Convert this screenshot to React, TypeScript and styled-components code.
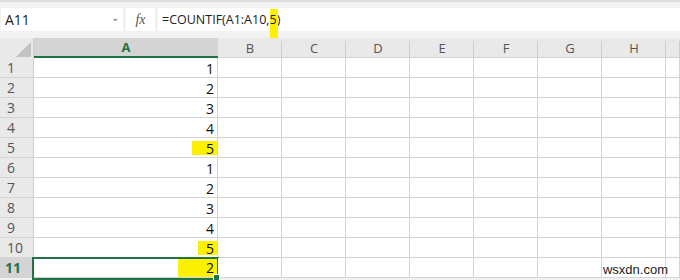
import React from 'react'
import styled, { createGlobalStyle } from 'styled-components'

const GlobalStyle = createGlobalStyle`
  html, body {
    margin: 0;
    padding: 0;
    background: #ffffff;
  }
  body {
    font-family: "Open Sans", "Liberation Sans", sans-serif;
    overflow: hidden;
  }
`

const excelGreen = '#217346'
const highlight = '#fdf000'

const Sheet = styled.div`
  width: 680px;
  height: 280px;
  position: relative;
  overflow: hidden;
  background: #f2f2f2;
`

const FormulaBar = styled.div`
  display: flex;
  align-items: stretch;
  gap: 3px;
  height: 23px;
  padding: 6px 0 7px 1px;
  border-top: 2px solid #dedede;
  box-sizing: content-box;
  position: relative;
`

const NameBox = styled.div`
  width: 122px;
  background: #fff;
  display: flex;
  align-items: center;
  justify-content: space-between;
  padding: 0 4px 0 4px;
  box-sizing: border-box;
  font-size: 14px;
  color: #222;
`

const Chevron = styled.span`
  font-size: 10px;
  color: #666;
  margin-top: -5px;
`

const FxBox = styled.div`
  width: 29px;
  background: #fff;
  display: flex;
  align-items: center;
  justify-content: center;
  font-family: "Liberation Serif", serif;
  font-style: italic;
  font-size: 14px;
  color: #555;
`

const FormulaInput = styled.div`
  flex: 1;
  background: #fff;
  display: flex;
  align-items: center;
  padding-left: 4px;
  font-size: 12.5px;
  color: #222;
  position: relative;
`

const Mark = styled.span`
  position: relative;
  &::before {
    content: '';
    position: absolute;
    left: 0;
    right: -1px;
    top: -2px;
    bottom: -12px;
    background: ${highlight};
    z-index: 0;
  }
  & > span {
    position: relative;
    z-index: 1;
  }
`

const Grid = styled.div`
  display: grid;
  grid-template-columns: 34px 184px repeat(7, 64px) 1fr;
  grid-template-rows: 20px repeat(11, 20px);
  margin-top: 0;
`

const Corner = styled.div`
  background: #e9e9e9;
  border-right: 1px solid #d0d0d0;
  position: relative;
  &::after {
    content: '';
    position: absolute;
    right: 2px;
    bottom: 1px;
    width: 0;
    height: 0;
    border-left: 15px solid transparent;
    border-bottom: 15px solid #c2c2c2;
  }
`

const ColHead = styled.div<{ $active?: boolean }>`
  background: ${p => (p.$active ? '#d4d4d4' : '#e9e9e9')};
  border-bottom: ${p => (p.$active ? `2px solid ${excelGreen}` : '1px solid #d4d4d4')};
  display: flex;
  align-items: center;
  justify-content: center;
  font-size: 13px;
  font-weight: ${p => (p.$active ? 700 : 400)};
  color: ${p => (p.$active ? excelGreen : '#555')};
  box-sizing: border-box;
  position: relative;
  &::after {
    content: '';
    position: absolute;
    right: 0;
    top: 3px;
    bottom: 0;
    width: 1px;
    background: ${p => (p.$active ? 'transparent' : '#cdcdcd')};
  }
`

const RowHead = styled.div<{ $active?: boolean }>`
  background: ${p => (p.$active ? '#d4d4d4' : '#e9e9e9')};
  border-bottom: 1px solid #d4d4d4;
  border-right: 1px solid #d0d0d0;
  box-sizing: border-box;
  display: flex;
  align-items: center;
  padding-left: ${p => (p.$active ? 5 : 7)}px;
  font-size: 14px;
  font-weight: ${p => (p.$active ? 700 : 400)};
  color: ${p => (p.$active ? excelGreen : '#555')};
`

const Cell = styled.div<{ $selected?: boolean }>`
  background: #fff;
  border-right: 1px solid #d4d4d4;
  border-bottom: 1px solid #d4d4d4;
  box-sizing: border-box;
  display: flex;
  align-items: stretch;
  justify-content: flex-end;
  font-size: 14px;
  color: #111;
  position: relative;
  ${p =>
    p.$selected &&
    `
    &::after {
      content: '';
      position: absolute;
      left: -2px;
      top: -1px;
      right: -2px;
      bottom: -3px;
      border: 2px solid ${excelGreen};
      pointer-events: none;
    }
    &::before {
      content: '';
      position: absolute;
      right: -3px;
      bottom: -4px;
      width: 5px;
      height: 5px;
      background: ${excelGreen};
      border: 1px solid #fff;
      z-index: 2;
    }
  `}
`

const Value = styled.span<{ $hl?: number; $full?: boolean }>`
  display: flex;
  align-items: center;
  justify-content: flex-end;
  padding: 0 3px 0 ${p => p.$hl ?? 0}px;
  margin: ${p => (p.$full ? '0' : '3px 0 2px')};
  background: ${p => (p.$hl ? highlight : 'transparent')};
`

const Watermark = styled.div`
  position: absolute;
  right: 12px;
  bottom: 3px;
  font-family: "Liberation Sans", sans-serif;
  font-size: 13px;
  color: #222;
`

const columns = ['A', 'B', 'C', 'D', 'E', 'F', 'G', 'H', '']
const values = [1, 2, 3, 4, 5, 1, 2, 3, 4, 5, 2]
const marks: Record<number, number> = { 5: 14, 10: 8, 11: 28 }

export default function App() {
  return (
    <>
      <GlobalStyle />
      <Sheet>
        <FormulaBar>
          <NameBox>
            A11
            <Chevron>⌄</Chevron>
          </NameBox>
          <FxBox>fx</FxBox>
          <FormulaInput>
            =COUNTIF(A1:A10,
            <Mark>
              <span>5</span>
            </Mark>
            )
          </FormulaInput>
        </FormulaBar>
        <Grid>
          <Corner />
          {columns.map((c, i) => (
            <ColHead key={i} $active={c === 'A'}>
              {c}
            </ColHead>
          ))}
          {values.map((v, r) => {
            const row = r + 1
            const active = row === 11
            return (
              <React.Fragment key={row}>
                <RowHead $active={active}>{row}</RowHead>
                <Cell $selected={active}>
                  <Value $hl={marks[row]} $full={active}>
                    {v}
                  </Value>
                </Cell>
                {columns.slice(1).map((c, i) => (
                  <Cell key={i} />
                ))}
              </React.Fragment>
            )
          })}
        </Grid>
        <Watermark>wsxdn.com</Watermark>
      </Sheet>
    </>
  )
}
